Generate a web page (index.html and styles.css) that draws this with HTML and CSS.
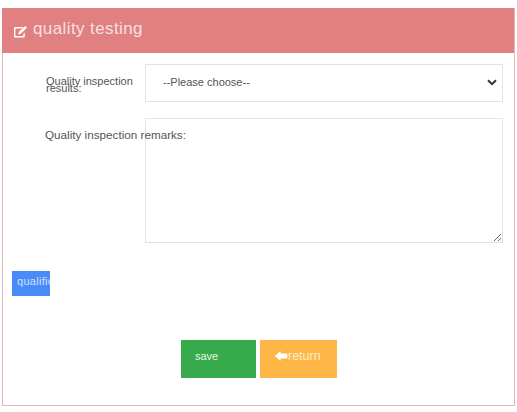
FILE: index.html
```html
<!DOCTYPE html>
<html>
<head>
    <title>quality testing</title>
    <link rel="stylesheet" href="styles.css">
</head>
<body>
    <div class="panel">
        <div class="panel-head">
            <svg class="edit-icon" width="15" height="13" viewBox="0 0 15 13">
                <path d="M10.5 2H2.6C1.7 2 1 2.7 1 3.6v7.3c0 .9.7 1.6 1.6 1.6h7.6c.9 0 1.6-.7 1.6-1.6V7.5l-1.4 1.4v1.7c0 .3-.2.5-.5.5H2.9c-.3 0-.5-.2-.5-.5V3.9c0-.3.2-.5.5-.5h6.2z" fill="#fff"/>
                <path d="M12.2 1l1.8 1.8-6.4 6.1-2.4.6.6-2.4z" fill="#fff"/>
            </svg>
            <span class="panel-title">quality testing</span>
        </div>
        <div class="panel-body">
            <div class="form-row">
                <label class="form-label form-label-tight">Quality inspection results:</label>
                <select class="form-select">
                    <option>--Please choose--</option>
                </select>
            </div>
            <div class="form-row form-row-area">
                <label class="form-label form-label-wide">Quality inspection remarks:</label>
                <textarea class="form-area"></textarea>
            </div>
            <div class="tag-btn"><span>qualified</span></div>
            <div class="actions">
                <a class="btn btn-save">save</a>
                <a class="btn btn-return">
                    <svg width="14" height="12" viewBox="0 0 14 12"><path d="M0.8 6L6.5 1V3.6H12.2Q13.4 3.6 13.4 4.8V7.2Q13.4 8.4 12.2 8.4H6.5V11z" fill="#fff"/></svg>
                    <span>return</span>
                </a>
            </div>
        </div>
    </div>
</body>
</html>
```

FILE: styles.css
```css
body {
    margin: 8px 2px 0;
    font-family: "Liberation Sans", Arial, sans-serif;
    background: #fff;
}
.panel {
    width: 513px;
    height: 398px;
    box-sizing: border-box;
    border: 1px solid #dfb9bb;
    border-top: none;
}
.panel-head {
    height: 45px;
    margin-left: -1px;
    background: #e08081;
    display: flex;
    align-items: center;
    padding-left: 11px;
    color: #fff;
}
.edit-icon {
    margin: 2px 5px 0 0;
}
.panel-title {
    font-size: 17px;
    letter-spacing: 0.4px;
    opacity: 0.75;
    margin-top: -4px;
}
.panel-body {
    padding: 11px 10px 0 9px;
}
.form-row {
    display: flex;
    margin-left: 33px;
    color: #555;
    font-size: 11px;
}
.form-row-area {
    margin-top: 16px;
}
.form-label {
    width: 100px;
    flex: none;
}
.form-label-tight {
    line-height: 7px;
    padding-top: 14px;
    padding-left: 1px;
    width: 99px;
}
/* runs over the textarea's edge, as in the original */
.form-label-wide {
    white-space: nowrap;
    padding-top: 10px;
    line-height: 14px;
    font-size: 11.7px;
    position: relative;
    z-index: 1;
}
.form-select {
    width: 358px;
    height: 38px;
    box-sizing: border-box;
    border: 1px solid #e3e3e3;
    background: #fff url("data:image/svg+xml,%3Csvg xmlns='http://www.w3.org/2000/svg' width='10' height='7'%3E%3Cpath d='M1 1.2l4 4 4-4' fill='none' stroke='%23333' stroke-width='2'/%3E%3C/svg%3E") no-repeat 341px 14px;
    appearance: none;
    padding: 0 0 3px 17px;
    border-radius: 0;
    font: 11px "Liberation Sans", Arial, sans-serif;
    color: #555;
}
.form-area {
    width: 358px;
    height: 125px;
    box-sizing: border-box;
    border: 1px solid #e3e3e3;
    margin: 0;
    display: block;
}
.tag-btn {
    width: 38px;
    height: 25px;
    margin: 28px 0 0 0;
    background: #4a8cf7;
    color: #cfe0fb;
    font-size: 11px;
    letter-spacing: 0.3px;
    line-height: 20px;
    padding-left: 5px;
    box-sizing: border-box;
    overflow: hidden;
    white-space: nowrap;
}
.actions {
    display: flex;
    gap: 4px;
    margin: 44px 0 0 169px;
}
.btn {
    height: 38px;
    font-size: 11px;
    color: #e8f5e8;
    display: flex;
    align-items: center;
    box-sizing: border-box;
    padding-bottom: 6px;
}
.btn-save {
    width: 75px;
    background: #37aa4b;
    padding-left: 14px;
}
.btn-return {
    width: 77px;
    background: #feb646;
    padding-left: 14px;
    gap: 0;
    font-size: 12.5px;
    color: #fbeec9;
}
```
